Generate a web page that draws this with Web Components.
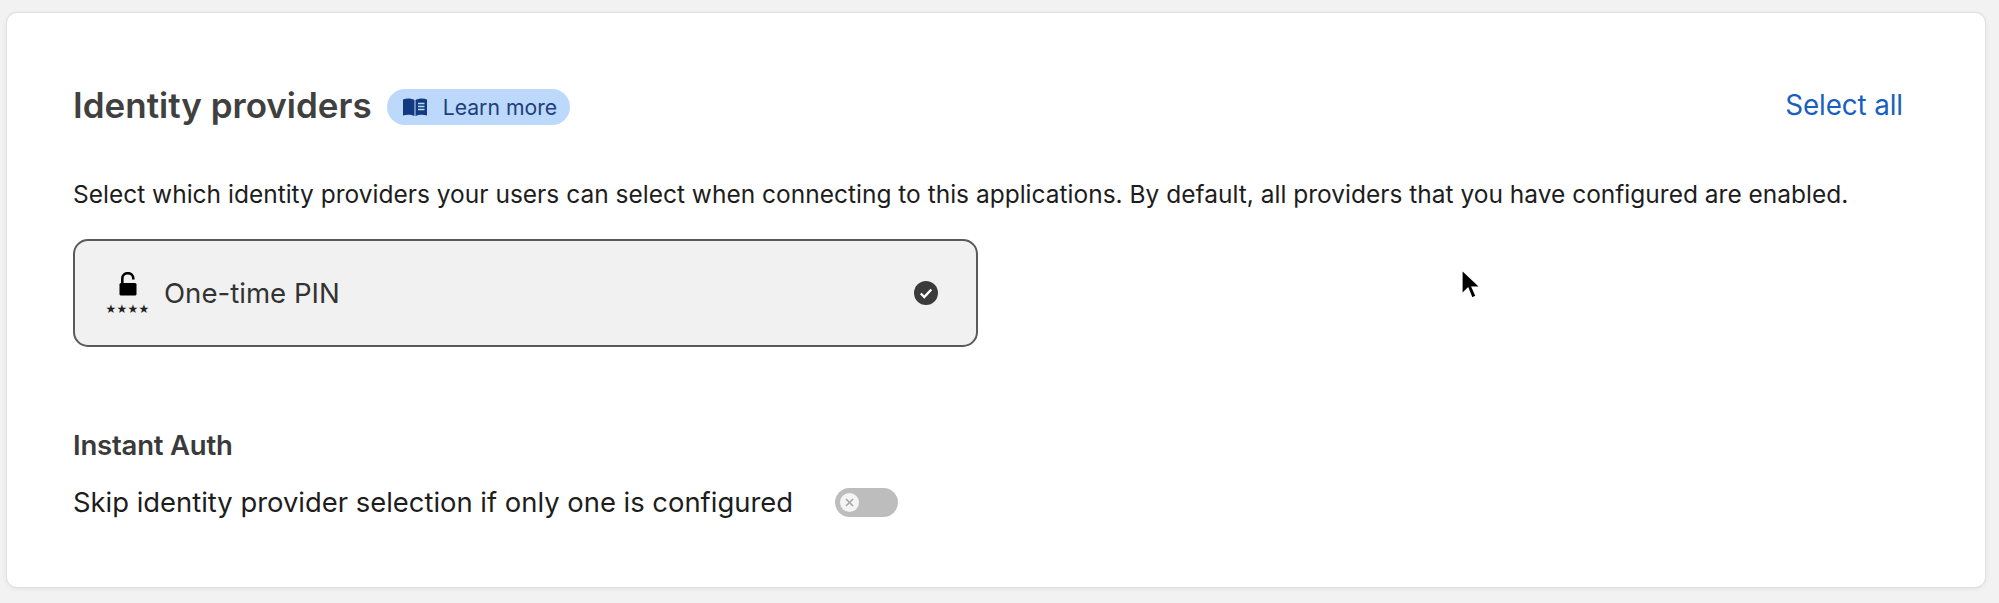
<!DOCTYPE html>
<html><head><meta charset="utf-8">
<style>
html,body{margin:0;padding:0;height:603px;overflow:hidden;background:#f2f2f2;}
body{font-family:Inter,"Liberation Sans",sans-serif;color:#1d1d1d;}
</style></head><body>
<template id="t-card"><style>
:host{display:block;position:relative;margin:13px 14px 0 7px;height:574px;box-sizing:border-box;background:#fff;border-radius:10px;box-shadow:0 0 0 1px #e2e2e2,0 1px 5px rgba(0,0,0,.10);padding:0 82px 0 66px;}
</style><slot></slot></template>

<template id="t-header"><style>
:host{display:flex;align-items:center;justify-content:space-between;padding-top:74px;height:36px;}
.l{display:flex;align-items:center;gap:15px;}
h2{margin:0;font:600 35px/36px Inter,sans-serif;color:#404040;}
a{font:400 27.800px/36px Inter,sans-serif;color:#1a5fc0;letter-spacing:-.1px;}
</style><div class="l"><h2><slot name="title"></slot></h2><slot name="badge"></slot></div><a><slot name="action"></slot></a></template>

<template id="t-badge"><style>
:host{display:inline-flex;align-items:center;box-sizing:border-box;height:36px;width:183px;padding-left:15px;gap:15px;border-radius:18px;background:#bcd9fb;color:#1d3f7c;font:400 21.200px/36px Inter,sans-serif;margin-top:3px;}
svg{width:26px;height:20px;flex:none;}
</style><svg viewBox="0 0 26 20"><path fill="#123a80" d="M1 2.500C4.500 1 9 1 12.500 3v16C9 17.500 4.500 17.500 1 18.500z"/><path fill="#123a80" d="M13.500 3C17 1 21.500 1 25 2.500v16c-3.500-1-8-1-11.500.5z"/><path stroke="#bcd9fb" stroke-width="1.300" d="M16 6.500h6.500M16 9.500h6.500M16 12.500h6.500"/></svg><slot></slot></template>

<template id="t-pcard"><style>
:host{display:flex;align-items:center;box-sizing:border-box;width:905px;height:108px;border:2px solid #5a5a5a;border-radius:15px;background:#f1f1f1;padding:0 38px 0 34px;font:400 27.600px/32px Inter,sans-serif;color:#333;}
.ico{display:flex;flex-direction:column;align-items:center;width:37px;margin-right:18px;}
.ico svg{display:block;}
.stars{font:700 12px/10px "DejaVu Sans",sans-serif;letter-spacing:.2px;margin-top:8px;color:#222;height:10px;}
.name{flex:1;}
</style><div class="ico"><svg width="18" height="24" viewBox="0 0 18 24"><path fill="none" stroke="#000" stroke-width="2.600" d="M3.300 11V6.500a5.500 5.300 0 0 1 11 0v1"/><rect x=".5" y="11" width="17" height="12.500" rx="1.500" fill="#000"/></svg><div class="stars">★★★★</div></div><div class="name"><slot></slot></div><svg width="24" height="24" viewBox="0 0 24 24"><circle cx="12" cy="12" r="12" fill="#3b3b3b"/><path d="M6.800 12.500l3.500 3.500 7-7.500" fill="none" stroke="#fff" stroke-width="2.400"/></svg></template>

<template id="t-toggle"><style>
:host{display:inline-block;position:relative;width:63px;height:29px;border-radius:15px;background:#bdbdbd;}
.k{position:absolute;left:5px;top:5px;width:19px;height:19px;border-radius:50%;background:#f4f4f4;}
svg{position:absolute;left:5px;top:5px;}
</style><div class="k"></div><svg width="19" height="19" viewBox="0 0 19 19"><path d="M6 6l7 7M13 6l-7 7" stroke="#a8a8a8" stroke-width="1.700"/></svg></template>

<template id="t-setting"><style>
:host{display:block;}
h3{margin:0;font:600 27.500px/30px Inter,sans-serif;color:#3a3a3a;letter-spacing:-.2px;}
.row{display:flex;align-items:center;gap:42px;margin-top:27px;font:400 27.400px/30px Inter,sans-serif;color:#1d1d1d;}
</style><h3><slot name="title"></slot></h3><div class="row"><span><slot name="label"></slot></span><slot name="control"></slot></div></template>

<template id="t-cursor"><style>
:host{position:absolute;left:1454px;top:256px;width:22px;height:34px;display:block;}
</style><svg width="22" height="34" viewBox="0 0 22 34"><path d="M1 1v24l6-6 4 10 4-2-4-9h8z" fill="#000" stroke="#fff" stroke-width="1.200"/></svg></template>

<x-card>
  <x-header><span slot="title">Identity providers</span><x-badge slot="badge">Learn more</x-badge><span slot="action">Select all</span></x-header>
  <p style="margin:56px 0 0;font:400 24.500px/30px Inter,sans-serif;color:#1d1d1d;height:30px;white-space:nowrap">Select which identity providers your users can select when connecting to this applications. By default, all providers that you have configured are enabled.</p>
  <div style="height:30px"></div>
  <x-pcard>One-time PIN</x-pcard>
  <div style="height:83px"></div>
  <x-setting><span slot="title">Instant Auth</span><span slot="label">Skip identity provider selection if only one is configured</span><x-toggle slot="control"></x-toggle></x-setting>
  <x-cursor></x-cursor>
</x-card>
<script>
for (const [n,t] of [['x-card','t-card'],['x-header','t-header'],['x-badge','t-badge'],['x-pcard','t-pcard'],['x-toggle','t-toggle'],['x-setting','t-setting'],['x-cursor','t-cursor']]) {
  customElements.define(n, class extends HTMLElement {
    constructor(){super();this.attachShadow({mode:'open'}).appendChild(document.getElementById(t).content.cloneNode(true));}
  });
}
</script>
</body></html>
